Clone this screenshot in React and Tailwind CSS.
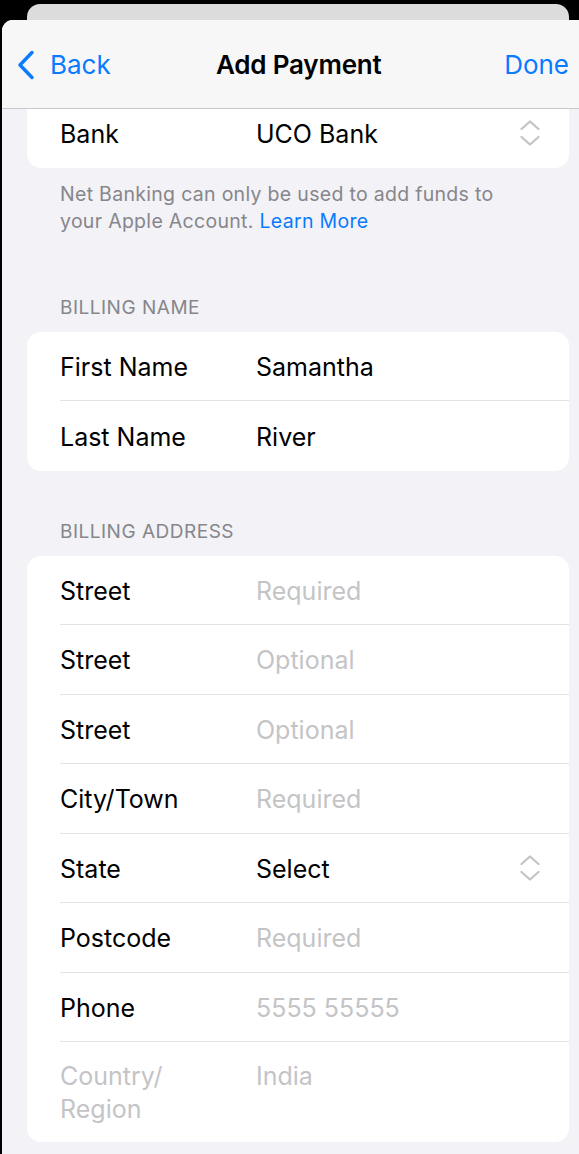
import { useState } from "react";

const font = { fontFamily: 'Inter, "Noto Sans", sans-serif' };

function UpDown() {
  return (
    <svg width="24" height="30" viewBox="0 0 24 30" fill="none" stroke="#c4c4c7" strokeWidth="2.3" strokeLinecap="round" strokeLinejoin="round">
      <path d="M3.5 11 L12 3.5 L20.5 11" />
      <path d="M3.5 19 L12 26.5 L20.5 19" />
    </svg>
  );
}

function Row({ label, value, placeholder, picker, divider = true }) {
  return (
    <div className="flex h-[69.5px] items-stretch pl-[33px]">
      <div className={`flex flex-1 items-center pt-[3px] ${divider ? "border-b border-[#e3e3e6]" : ""}`}>
        <div className="w-[196px] shrink-0 text-black">{label}</div>
        <div className={`flex-1 ${placeholder ? "text-[#c4c4c7]" : "text-black"}`}>{value}</div>
        {picker && (
          <div className="mr-[27px] -mt-[3px] flex items-center">
            <UpDown />
          </div>
        )}
      </div>
    </div>
  );
}

export default function App() {
  const [bank] = useState("UCO Bank");

  return (
    <div className="h-[1154px] w-[579px] overflow-hidden bg-black pt-[4px]" style={font}>
      {/* card behind the sheet */}
      <div className="ml-[27px] mr-[10px] h-[30px] rounded-t-[13px] bg-[#dcdcdd]" />

      {/* sheet */}
      <div className="relative -mt-[14px] ml-[2px] h-[1140px] overflow-hidden rounded-tl-[11px] bg-[#f2f2f7]">
        {/* nav bar */}
        <div className="relative z-10 flex h-[89px] items-center border-b border-[#c8c8cb] bg-[#f7f7f8] pl-[14px] pr-[10px] pt-[1px]">
          <div className="flex w-[200px] items-center text-[#0a7aff]">
            <svg width="20" height="30" viewBox="0 0 20 30" fill="none" stroke="#0a7aff" strokeWidth="3.4" strokeLinecap="round" strokeLinejoin="round">
              <path d="M16 2.5 L4 15 L16 27.5" />
            </svg>
            <span className="ml-[14px] text-[26px]">Back</span>
          </div>
          <div className="text-[26px] font-semibold tracking-[-0.2px] text-black">Add Payment</div>
          <div className="ml-auto text-[26px] text-[#0a7aff]">Done</div>
        </div>

        {/* content */}
        <div className="-mt-[11px] ml-[25px] mr-[10px] text-[25px]">
          <div className="overflow-hidden rounded-[14px] bg-white">
            <Row label="Bank" value={bank} picker divider={false} />
          </div>

          <p className="mt-[13px] px-[33px] text-[19.5px] leading-[27px] tracking-[0.3px] text-[#86868b]">
            Net Banking can only be used to add funds to
            <br />
            your Apple Account. <span className="text-[#0a7aff]">Learn More</span>
          </p>

          <div className="mt-[61px] px-[33px] text-[19px] leading-[24px] tracking-[0.5px] text-[#86868b]">BILLING NAME</div>
          <div className="mt-[12px] overflow-hidden rounded-[14px] bg-white">
            <Row label="First Name" value="Samantha" />
            <Row label="Last Name" value="River" divider={false} />
          </div>

          <div className="mt-[49px] px-[33px] text-[19px] leading-[24px] tracking-[0.5px] text-[#86868b]">BILLING ADDRESS</div>
          <div className="mt-[12px] overflow-hidden rounded-[14px] bg-white">
            <Row label="Street" value="Required" placeholder />
            <Row label="Street" value="Optional" placeholder />
            <Row label="Street" value="Optional" placeholder />
            <Row label="City/Town" value="Required" placeholder />
            <Row label="State" value="Select" picker />
            <Row label="Postcode" value="Required" placeholder />
            <Row label="Phone" value="5555 55555" placeholder />
            <div className="flex pl-[33px] pt-[18px] pb-[16px] leading-[33px] text-[#c4c4c7]">
              <div className="w-[196px] shrink-0">
                Country/
                <br />
                Region
              </div>
              <div>India</div>
            </div>
          </div>
        </div>
      </div>
    </div>
  );
}
